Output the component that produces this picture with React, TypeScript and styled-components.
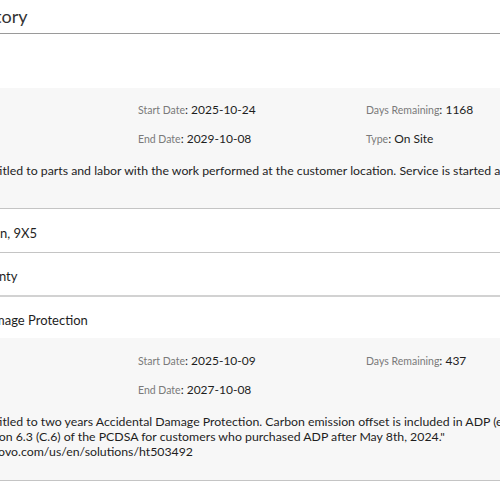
import React from 'react';
import styled, { createGlobalStyle } from 'styled-components';

const GlobalStyle = createGlobalStyle`
  body {
    margin: 0;
    background: #ffffff;
    font-family: Lato, "Open Sans", sans-serif;
    color: #222222;
    overflow: hidden;
  }
`;

const Page = styled.div`
  margin-left: -120px;
  width: 1400px;
`;

const Title = styled.h2`
  margin: 0;
  padding-left: 11px;
  font-size: 18px;
  font-weight: 400;
  color: #333333;
  line-height: 33px;
  border-bottom: 1px solid #9a9a9a;
`;

const List = styled.div`
  margin-top: 10px;
`;

interface HeaderProps {
  thick?: boolean;
  first?: boolean;
  indent?: number;
}

const ItemHeader = styled.div<HeaderProps>`
  box-sizing: border-box;
  height: 43px;
  display: flex;
  align-items: center;
  padding: 4px 0 0 ${(p) => p.indent ?? 30}px;
  font-size: 13px;
  color: #1e1e1e;
  border-top: ${(p) =>
    p.first ? 'none' : p.thick ? '2px solid #d2d2d2' : '1px solid #c4c4c4'};
`;

const Spacer = styled.div`
  height: 44px;
`;

interface DetailsProps {
  head?: number;
  tail?: number;
}

const Details = styled.div<DetailsProps>`
  background: #f7f7f7;
  padding: ${(p) => p.head ?? 14}px 0 ${(p) => p.tail ?? 21}px 30px;
  border-bottom: 1px solid #c4c4c4;
`;

const Grid = styled.div`
  display: grid;
  grid-template-columns: repeat(4, 228px);
  row-gap: 13px;
`;

const Field = styled.div`
  font-size: 12px;
  line-height: 16px;
  color: #1e1e1e;
`;

const Label = styled.span`
  font-size: 10.5px;
  color: #7a7a7a;
`;

const Description = styled.p`
  margin: 16px 0 0;
  font-size: 12.3px;
  line-height: 15px;
  color: #1e1e1e;
  white-space: nowrap;
`;

interface InfoProps {
  name?: string;
  value?: string;
}

const Info = ({ name, value }: InfoProps) => (
  <Field>
    {name && (
      <>
        <Label>{name}</Label>: {value}
      </>
    )}
  </Field>
);

const App = () => (
  <>
    <GlobalStyle />
    <Page>
      <Title>Warranty History</Title>
      <List>
        <Spacer />
        <Details tail={30}>
          <Grid>
            <Info />
            <Info name="Start Date" value="2025-10-24" />
            <Info name="Days Remaining" value="1168" />
            <Info />
            <Info />
            <Info name="End Date" value="2029-10-08" />
            <Info name="Type" value="On Site" />
          </Grid>
          <Description>
            "Customer is entitled to parts and labor with the work performed at the customer location. Service is started and completed during business hours."
          </Description>
        </Details>
        <ItemHeader first>Onsite Extension, 9X5</ItemHeader>
        <ItemHeader>Premium Warranty</ItemHeader>
        <ItemHeader thick indent={35}>
          Accidental Damage Protection
        </ItemHeader>
        <Details head={15}>
          <Grid>
            <Info />
            <Info name="Start Date" value="2025-10-09" />
            <Info name="Days Remaining" value="437" />
            <Info />
            <Info />
            <Info name="End Date" value="2027-10-08" />
          </Grid>
          <Description>
            "Customer is entitled to two years Accidental Damage Protection. Carbon emission offset is included in ADP (excluding certain products)
            <br />
            as noted in Section 6.3 (C.6) of the PCDSA for customers who purchased ADP after May 8th, 2024."
            <br />
            Visit support.lenovo.com/us/en/solutions/ht503492
          </Description>
        </Details>
      </List>
    </Page>
  </>
);

export default App;
